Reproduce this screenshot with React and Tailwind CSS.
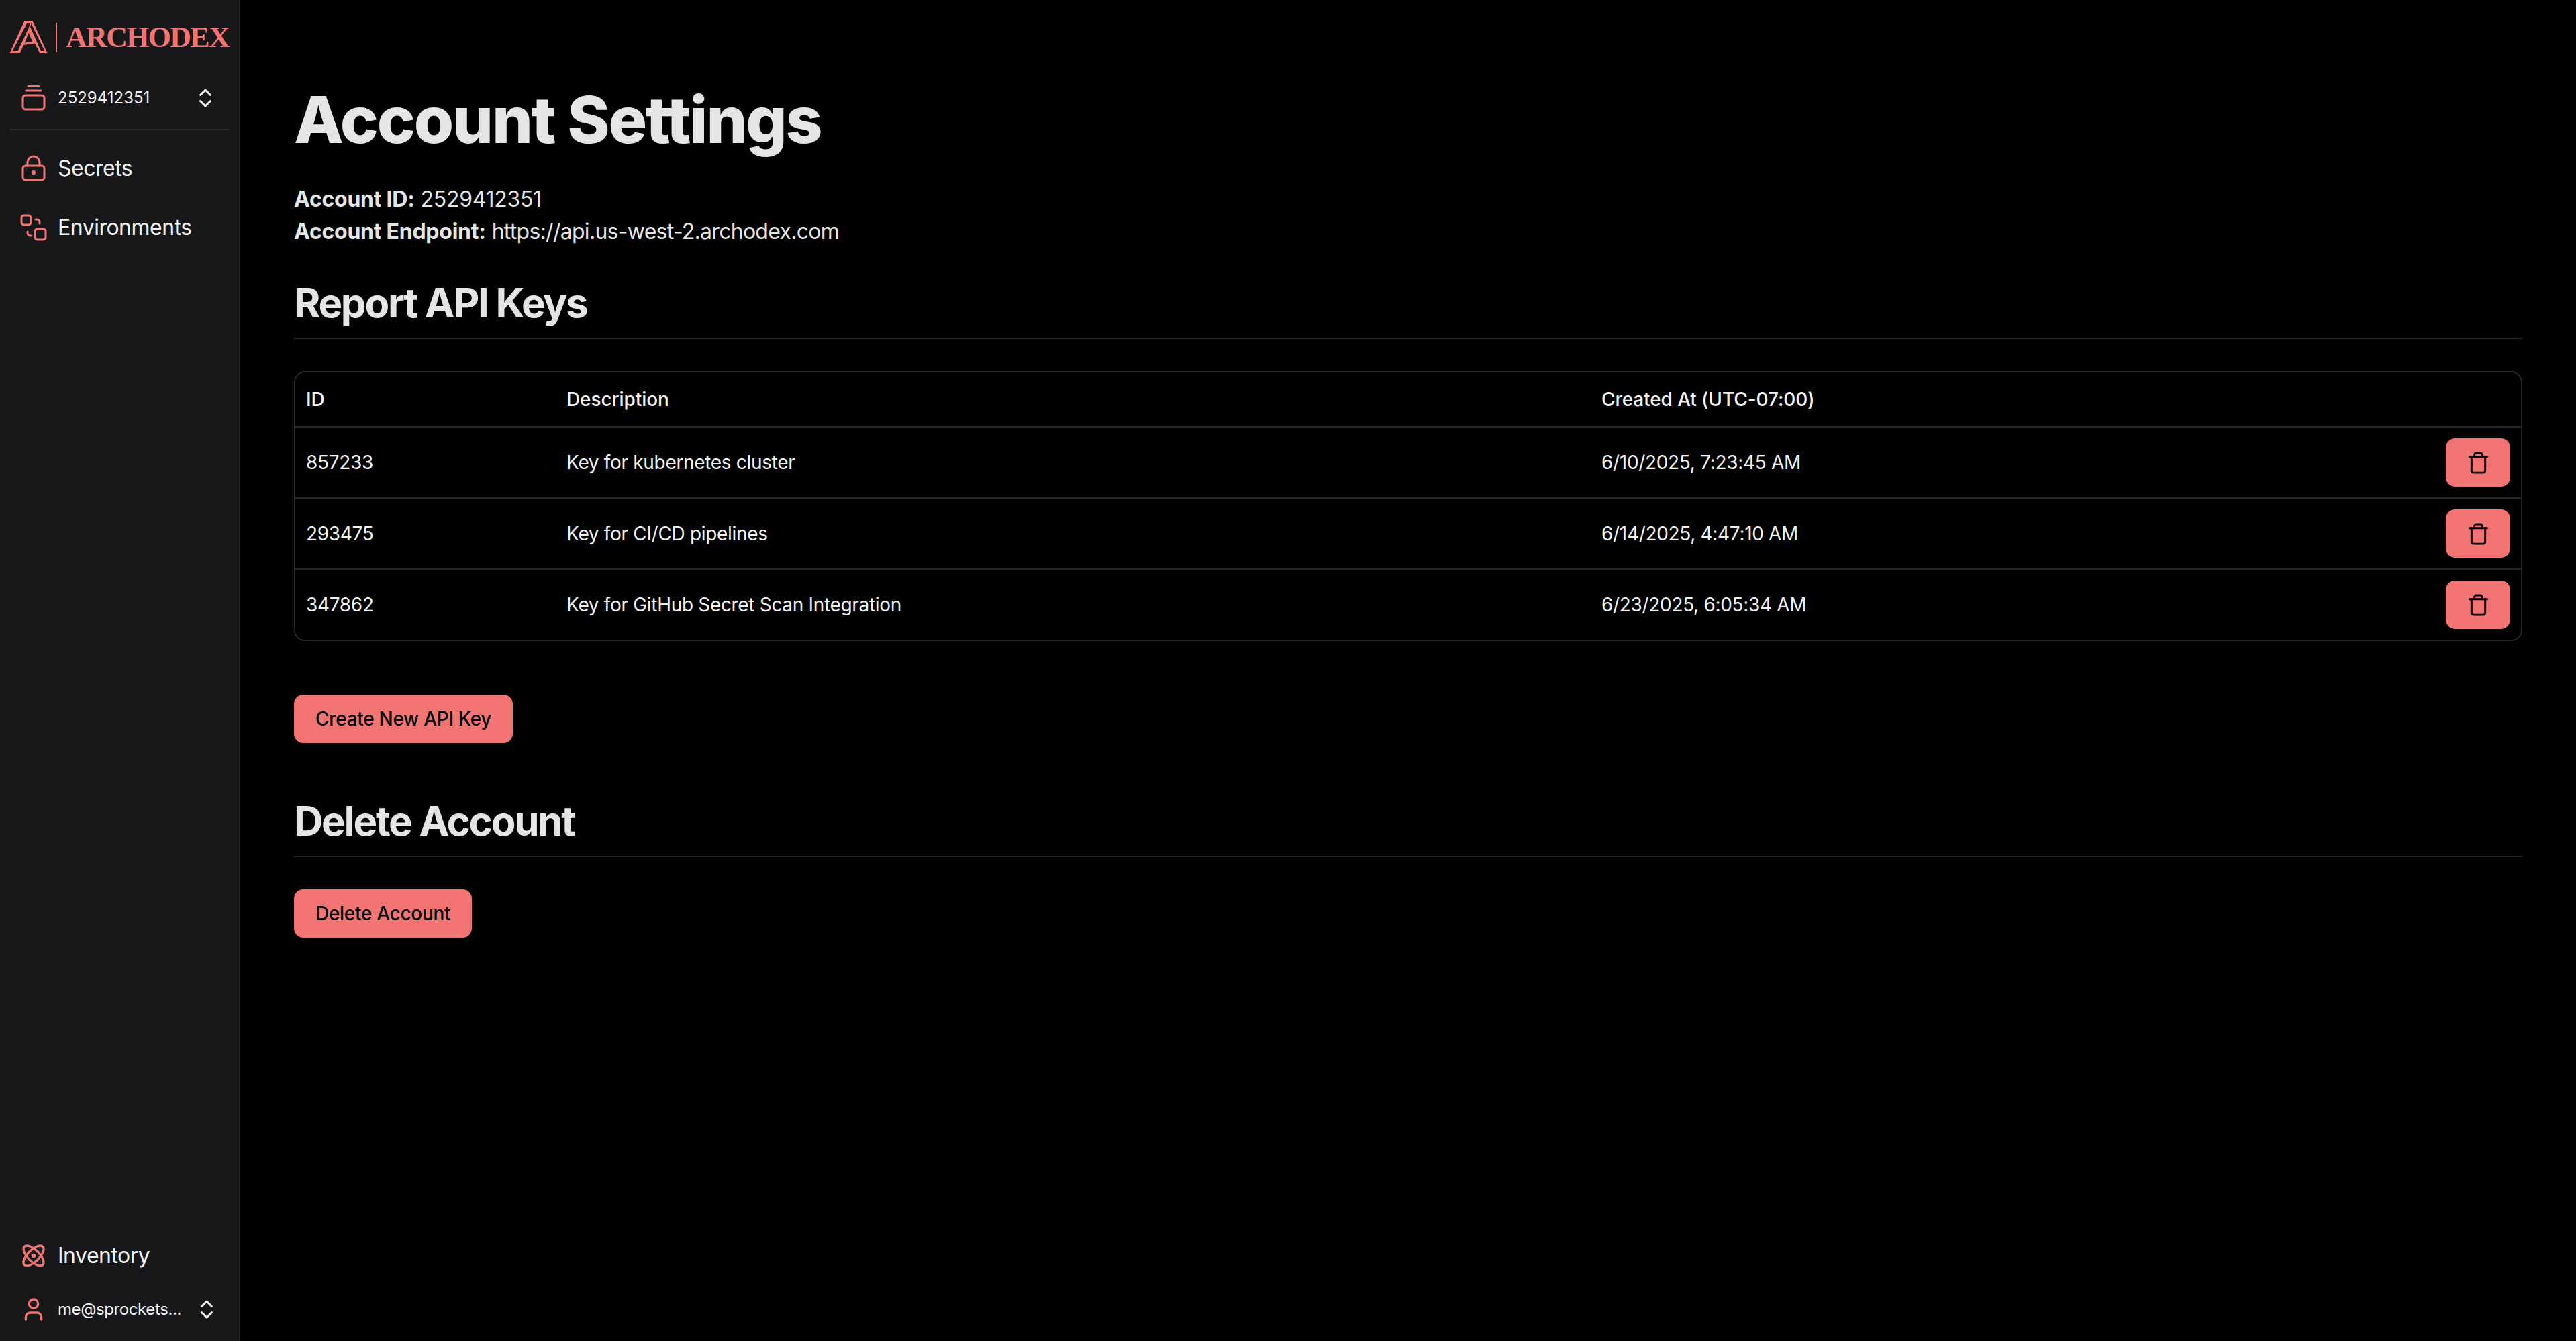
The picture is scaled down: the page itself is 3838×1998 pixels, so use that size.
import React from 'react'
import { Atom, ChevronsUpDown, Trash, User } from 'lucide-react'

const keys = [
  { id: '857233', description: 'Key for kubernetes cluster', created: '6/10/2025, 7:23:45 AM' },
  { id: '293475', description: 'Key for CI/CD pipelines', created: '6/14/2025, 4:47:10 AM' },
  { id: '347862', description: 'Key for GitHub Secret Scan Integration', created: '6/23/2025, 6:05:34 AM' },
]

const Logo = () => (
  <svg viewBox="4 7 57 50" className="w-[57px] h-[50px] shrink-0" fill="#f27573">
    <path
      fillRule="evenodd"
      d="M4.5 55 L26 8 H39 L60.5 55 H49 L42 40.5 L25 43 L20 55 Z M30 11 L8.5 52 H16.5 L33 17 L34.5 11 Z M36.5 11 L35 16 L51 52 H56.5 Z M32.5 25 L27 39.5 L38.5 37.5 Z"
    />
  </svg>
)

const StackIcon = () => (
  <svg viewBox="0 0 36 40" className="w-[36px] h-[40px]" fill="none" stroke="#f27573" strokeWidth="3" strokeLinecap="round" strokeLinejoin="round">
    <path d="M10 2.5 H26" />
    <path d="M7 9 H29" />
    <rect x="2" y="16" width="32" height="21" rx="4" />
  </svg>
)

const LockIcon = () => (
  <svg viewBox="0 0 36 40" className="w-[36px] h-[40px]" fill="none" stroke="#f27573" strokeWidth="3" strokeLinecap="round" strokeLinejoin="round">
    <rect x="2" y="16" width="32" height="21" rx="4" />
    <path d="M9 16 V11 A9 9 0 0 1 27 11 V16" />
    <circle cx="18" cy="26" r="1.6" fill="#f27573" />
  </svg>
)

const EnvIcon = () => (
  <svg viewBox="0 0 40 40" className="w-[40px] h-[40px]" fill="none" stroke="#f27573" strokeWidth="3" strokeLinecap="round" strokeLinejoin="round">
    <rect x="2" y="2" width="14" height="14" rx="3.5" />
    <rect x="22" y="22" width="16" height="16" rx="3.5" />
    <path d="M23 8 H25 A4 4 0 0 1 29 12 V14" />
    <path d="M17 32 H15 A4 4 0 0 1 11 28 V26" />
  </svg>
)

const NavItem = ({ icon, label }) => (
  <div className="flex items-center h-[72px] pl-[30px] text-[32px] leading-[48px] tracking-[-0.5px] text-[#f2f2f2]">
    <div className="w-[40px] flex justify-center shrink-0">{icon}</div>
    <span className="ml-[16px]">{label}</span>
  </div>
)

const SectionTitle = ({ children, className }) => (
  <h2 className={`text-[60px] leading-[72px] font-bold tracking-[-0.038em] text-[#e4e5e5] border-b-2 border-[#27272a] pb-[16px] ${className}`}>
    {children}
  </h2>
)

const Button = ({ children, className }) => (
  <button className={`h-[72px] px-[32px] rounded-[14px] bg-[#f27573] text-black text-[28px] font-medium tracking-[-0.3px] ${className}`}>
    {children}
  </button>
)

export default function App() {
  return (
    <div className="flex h-[1998px] bg-black font-['Inter',sans-serif] overflow-hidden">
      <aside className="w-[358px] shrink-0 bg-[#18181b] border-r-2 border-[#27272a] flex flex-col">
        <div className="flex items-center pl-[14px] pt-[12px] h-[100px]">
          <Logo />
          <div className="w-[2px] h-[44px] bg-[#f27573] ml-[12px]" />
          <span className="ml-[13px] font-['Liberation_Serif',serif] font-bold text-[#f27573] text-[44px] leading-[48px] tracking-[-1.7px]">ARCHODEX</span>
        </div>
        <div className="mx-[14px] border-b-2 border-[#27272a] h-[94px] flex items-center pl-[16px] pr-[18px]">
          <div className="w-[40px] flex justify-center shrink-0"><StackIcon /></div>
          <span className="ml-[16px] text-[24px] text-[#f2f2f2]">2529412351</span>
          <ChevronsUpDown className="ml-auto w-[36px] h-[36px] text-[#f2f2f2]" strokeWidth={2} />
        </div>
        <div className="mt-[21px] flex flex-col gap-[16px]">
          <NavItem icon={<LockIcon />} label="Secrets" />
          <NavItem icon={<EnvIcon />} label="Environments" />
        </div>
        <div className="mt-auto pb-[11px]">
          <NavItem icon={<Atom className="w-[40px] h-[40px] text-[#f27573]" strokeWidth={2} />} label="Inventory" />
          <div className="flex items-center h-[72px] pl-[30px] pr-[30px] mt-[8px]">
            <div className="w-[40px] flex justify-center shrink-0">
              <User className="w-[40px] h-[40px] text-[#f27573]" strokeWidth={2} />
            </div>
            <span className="ml-[16px] text-[24px] tracking-[-0.4px] text-[#f2f2f2]">me@sprockets...</span>
            <ChevronsUpDown className="ml-auto w-[36px] h-[36px] text-[#f2f2f2]" strokeWidth={2} />
          </div>
        </div>
      </aside>

      <main className="flex-1 px-[80px] pt-[120px]">
        <h1 className="text-[96px] leading-[116px] font-extrabold tracking-[-0.022em] text-[#e4e5e5]">Account Settings</h1>
        <div className="mt-[37px] text-[32px] leading-[48px] text-[#e4e5e5]">
          <p><strong className="font-bold tracking-[-0.25px]">Account ID:</strong> <span className="tracking-[-0.3px]">2529412351</span></p>
          <p><strong className="font-bold tracking-[-0.25px]">Account Endpoint:</strong> <span className="tracking-[-0.72px]">https://api.us-west-2.archodex.com</span></p>
        </div>
        <SectionTitle className="mt-[46px]">Report API Keys</SectionTitle>

        <div className="mt-[48px] border-2 border-[#27272a] rounded-[16px] text-[28px] text-[#f2f2f2]">
          <div className="flex items-center h-[80px] font-medium tracking-[-0.1px]">
            <div className="w-[388px] pl-[16px]">ID</div>
            <div className="w-[1542px] pl-[16px]">Description</div>
            <div className="flex-1 pl-[16px]">Created At (UTC-07:00)</div>
          </div>
          {keys.map((key) => (
            <div key={key.id} className="flex items-center h-[106px] border-t-2 border-[#27272a] tracking-[-0.32px]">
              <div className="w-[388px] pl-[16px]">{key.id}</div>
              <div className="w-[1542px] pl-[16px]">{key.description}</div>
              <div className="flex-1 pl-[16px]">{key.created}</div>
              <button className="w-[96px] h-[72px] mr-[16px] rounded-[14px] bg-[#f27573] flex items-center justify-center">
                <Trash className="w-[35px] h-[35px] text-black" strokeWidth={2} />
              </button>
            </div>
          ))}
        </div>

        <Button className="mt-[80px] block">Create New API Key</Button>
        <SectionTitle className="mt-[80px]">Delete Account</SectionTitle>
        <Button className="mt-[48px] block">Delete Account</Button>
      </main>
    </div>
  )
}
